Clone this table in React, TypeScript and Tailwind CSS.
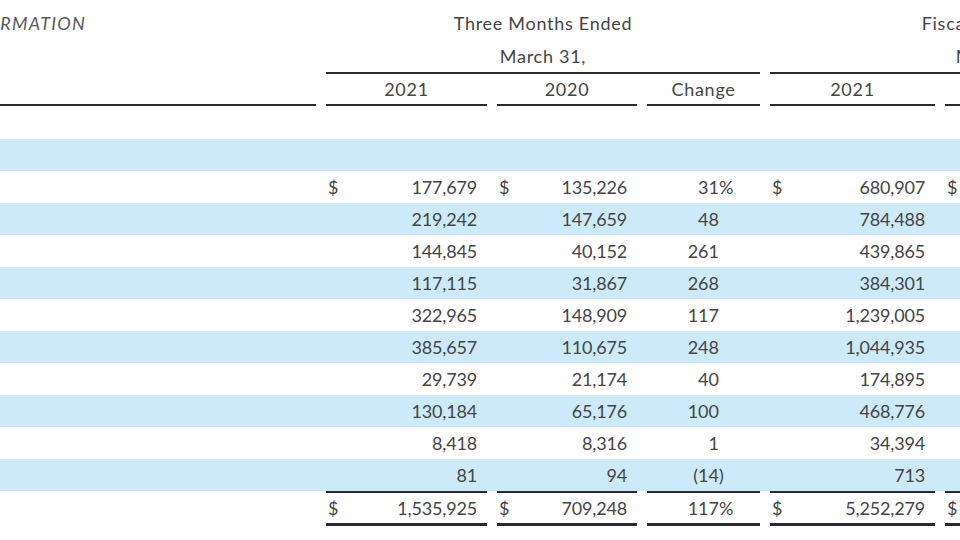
import React from "react";

const GRID =
  "grid grid-cols-[316px_161px_140px_113px_165px_160px_113px] gap-x-[10px]";

type R = {
  a: string;
  b: string;
  c: string;
  cs?: string;
  d: string;
  dollar?: boolean;
};

const rows: R[] = [
  { a: "177,679", b: "135,226", c: "31", cs: "%", d: "680,907", dollar: true },
  { a: "219,242", b: "147,659", c: "48", d: "784,488" },
  { a: "144,845", b: "40,152", c: "261", d: "439,865" },
  { a: "117,115", b: "31,867", c: "268", d: "384,301" },
  { a: "322,965", b: "148,909", c: "117", d: "1,239,005" },
  { a: "385,657", b: "110,675", c: "248", d: "1,044,935" },
  { a: "29,739", b: "21,174", c: "40", d: "174,895" },
  { a: "130,184", b: "65,176", c: "100", d: "468,776" },
  { a: "8,418", b: "8,316", c: "1", d: "34,394" },
  { a: "81", b: "94", c: "(14", cs: ")", d: "713" },
];

function Money({ v, dollar, cls = "" }: { v: string; dollar?: boolean; cls?: string }) {
  return (
    <div className={`flex items-center justify-between pr-[10px] ${cls}`}>
      <span className="pl-[2px]">{dollar ? "$" : ""}</span>
      <span className="tracking-[-0.01em]">{v}</span>
    </div>
  );
}

function Change({ v, s, cls = "" }: { v: string; s?: string; cls?: string }) {
  return (
    <div className={`flex items-center ${cls}`}>
      <span className="w-[72px] text-right">{v}</span>
      <span className="flex-1 text-left">{s ?? ""}</span>
    </div>
  );
}

const LINE = "border-[#2b2b2b]";
const TOTAL = "border-t-2 border-b-[3px] border-b-double border-[#2b2b2b]";

export default function App() {
  return (
    <div
      className="w-[960px] h-[540px] overflow-hidden bg-white text-[18px] text-[#454545]"
      style={{ fontFamily: "Lato, 'Open Sans', sans-serif" }}
    >
      <div className="w-[1228px] pt-[6px]">
        {/* header row A */}
        <div className={`${GRID} h-[34px] items-center tracking-[0.04em]`}>
          <div className="flex justify-start">
            <div className="w-[86px] overflow-hidden flex justify-end">
              <span className="whitespace-nowrap italic uppercase text-[#5a5a5a] tracking-[0.07em]">
                Supplemental Financial Information
              </span>
            </div>
          </div>
          <div className="col-span-3 text-center">Three Months Ended</div>
          <div className="col-span-3 text-center pr-[6px]">Fiscal Year Ended</div>
        </div>
        {/* header row B */}
        <div className={`${GRID} h-[34px] tracking-[0.04em]`}>
          <div />
          <div className={`col-span-3 flex items-center justify-center border-b-2 ${LINE}`}>
            March 31,
          </div>
          <div className={`col-span-3 flex items-center justify-center border-b-2 ${LINE}`}>
            March 31,
          </div>
        </div>
        {/* header row C */}
        <div className={`${GRID} h-[32px] tracking-[0.04em]`}>
          <div className={`border-b-2 ${LINE}`} />
          {["2021", "2020", "Change", "2021", "2020", "Change"].map((t, i) => (
            <div
              key={i}
              className={`flex items-center justify-center border-b-2 ${LINE}`}
            >
              {t}
            </div>
          ))}
        </div>
        {/* blank rows */}
        <div className="h-[33px]" />
        <div className="h-[32px] bg-[#cdeafa]" />
        {rows.map((r, i) => (
          <div
            key={i}
            className={`${GRID} h-[32px] ${i % 2 === 1 ? "bg-[#cdeafa]" : ""}`}
          >
            <div />
            <Money v={r.a} dollar={r.dollar} />
            <Money v={r.b} dollar={r.dollar} />
            <Change v={r.c} s={r.cs} />
            <Money v={r.d} dollar={r.dollar} />
            <Money v="" dollar={r.dollar} />
            <Change v="" />
          </div>
        ))}
        {/* total row */}
        <div className={`${GRID} h-[35px]`}>
          <div />
          <Money v="1,535,925" dollar cls={TOTAL} />
          <Money v="709,248" dollar cls={TOTAL} />
          <Change v="117" s="%" cls={TOTAL} />
          <Money v="5,252,279" dollar cls={TOTAL} />
          <Money v="" dollar cls={TOTAL} />
          <Change v="" cls={TOTAL} />
        </div>
      </div>
    </div>
  );
}
